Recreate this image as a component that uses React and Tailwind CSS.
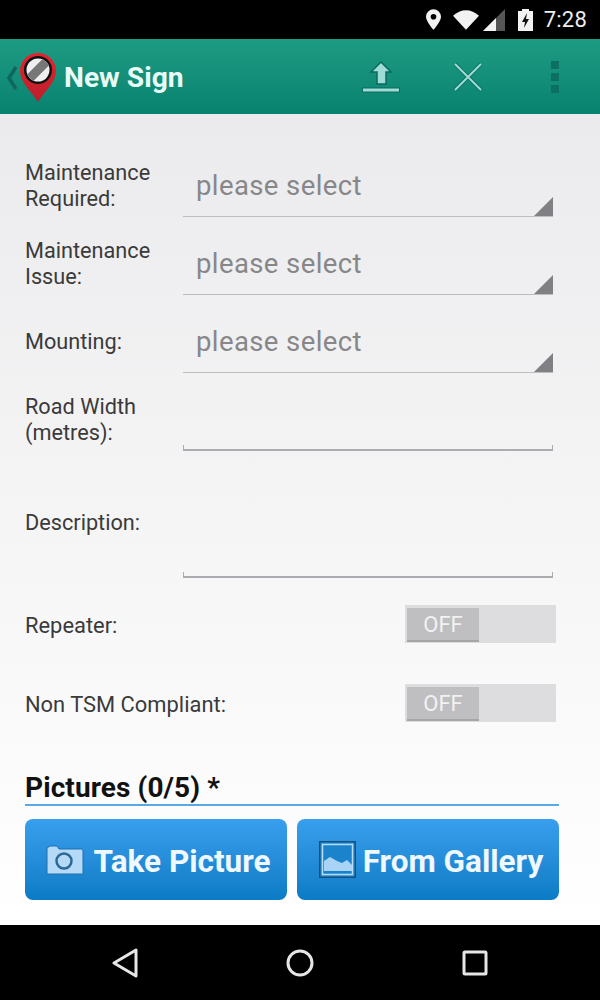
const SelectRow = ({ label }) => (
  <div className="flex h-[78px]">
    <div className="w-[158px] shrink-0 self-center pt-[16px] text-[21.7px] leading-[26px] text-[#3a3a3a]">{label}</div>
    <div className="relative flex h-[78px] w-[370px] items-end border-b border-[#bdbcbf] pb-[13px] pl-[13px] text-[27.5px] leading-[34px] tracking-[0.4px] text-[#878789]">
      please select
      <div className="absolute bottom-0 right-0 h-[19px] w-[19px] bg-[#808084] [clip-path:polygon(100%_0,100%_100%,0_100%)]" />
    </div>
  </div>
);

const TextRow = ({ label, height, labelTop }) => (
  <div className="flex" style={{ height }}>
    <div className="w-[158px] shrink-0 text-[21.7px] leading-[26px] text-[#3a3a3a]" style={{ paddingTop: labelTop }}>{label}</div>
    <div className="w-[370px] self-end">
      <div className="h-[6px] border-x border-b-2 border-[#acacb0]" />
    </div>
  </div>
);

const ToggleRow = ({ label }) => (
  <div className="flex h-[38px] items-center justify-between">
    <div className="pt-[3px] text-[21.9px] leading-[26px] text-[#3a3a3a]">{label}</div>
    <div className="mr-[3px] h-[38px] w-[151px] bg-[#dddcdf] pl-[2px] pt-[3px]">
      <div className="flex h-[34px] w-[72px] items-center justify-center border-b-2 border-[#a5a5a8] bg-[#bfbec1] text-[22px] text-[#f2f2f2]">OFF</div>
    </div>
  </div>
);

const CameraIcon = () => (
  <svg width="38" height="30" viewBox="0 0 38 30">
    <path d="M1 8V3l3-2h7l2 3h22c1 0 2 1 2 2v22c0 1-1 1-2 1H3c-1 0-2 0-2-1z" fill="#b4daf7" stroke="#1f6fad" strokeWidth="1" />
    <circle cx="18" cy="16" r="7.5" fill="#b4daf7" stroke="#2a6896" strokeWidth="2.5" />
  </svg>
);

const GalleryIcon = () => (
  <svg width="37" height="37" viewBox="0 0 37 37">
    <rect x="0.75" y="0.75" width="35.5" height="35.5" fill="#2a8fd6" stroke="#15507f" strokeWidth="1.5" />
    <rect x="3.5" y="3.5" width="30" height="30" fill="#1b82cc" stroke="#b5dcf7" strokeWidth="1.5" />
    <path d="M5 30V20l6-4 7 4 5 2 5-3 5 5v6z" fill="#a9d4f5" />
  </svg>
);

export default function App() {
  return (
    <div className="flex h-[1000px] w-[600px] flex-col overflow-hidden bg-black font-['Roboto',sans-serif]">
      <div className="flex h-[39px] shrink-0 items-center justify-end bg-black pr-[13px] text-[#ededed]">
        <svg width="15" height="21" viewBox="0 0 16 22" className="mr-[12px]">
          <path fillRule="evenodd" d="M8 0a8 8 0 0 1 8 8c0 5-8 14-8 14S0 13 0 8a8 8 0 0 1 8-8zm0 5a3 3 0 1 0 0 6 3 3 0 0 0 0-6z" fill="#f2f2f2" />
        </svg>
        <svg width="26" height="20" viewBox="0 0 28 21" className="mr-[4px]">
          <path d="M0 6C4 2 9 0 14 0s10 2 14 6L14 21z" fill="#f2f2f2" />
        </svg>
        <svg width="22" height="22" viewBox="0 0 22 22" className="mr-[13px]">
          <path d="M22 0v22H0z" fill="#555" />
          <path d="M13 9v13H0z" fill="#f2f2f2" />
        </svg>
        <svg width="15" height="22" viewBox="0 0 15 22" className="mr-[11px]">
          <path d="M4 2V0h7v2h4v20H0V2z" fill="#f2f2f2" />
          <path d="M9 4 4 13h3l-1 6 5-9H8z" fill="#111" />
        </svg>
        <div className="text-[22px] leading-none tracking-[0.2px]">7:28</div>
      </div>

      <div className="flex h-[75px] shrink-0 items-center bg-gradient-to-b from-[#1e9b83] to-[#06826f]">
        <svg width="12" height="24" viewBox="0 0 12 24" className="ml-[6px] mt-[2px]">
          <path d="M10 1 3 12l7 11" fill="none" stroke="#0f6660" strokeWidth="3.5" />
        </svg>
        <svg width="38" height="50" viewBox="0 0 38 50" className="ml-[1px] mt-[2px] shrink-0">
          <defs>
            <linearGradient id="pin" x1="0" y1="0" x2="0" y2="1">
              <stop offset="0" stopColor="#e8222e" />
              <stop offset="1" stopColor="#b9202b" />
            </linearGradient>
          </defs>
          <path d="M19 0c10 0 18 8 18 18 0 11-11 20-18 31C12 38 1 29 1 18 1 8 9 0 19 0z" fill="url(#pin)" />
          <circle cx="19" cy="17" r="14" fill="#111" />
          <circle cx="19" cy="17" r="11.5" fill="#efefef" />
          <path d="M11 25 27 9" stroke="#777" strokeWidth="9" />
        </svg>
        <div className="ml-[7px] mt-[4px] text-[28.2px] font-bold leading-none text-[#e8fbf7]">New Sign</div>
        <div className="flex-1" />
        <svg width="38" height="32" viewBox="0 0 38 32" className="mr-[52px]">
          <path d="M19 1 29 11h-5v12h-9V11H9z" fill="#a0dcd6" stroke="#0b6a60" strokeWidth="1.5" />
          <rect x="0.5" y="27" width="37" height="4" fill="#a0dcd6" stroke="#0b6a60" strokeWidth="1" />
        </svg>
        <svg width="32" height="32" viewBox="0 0 32 32" className="mr-[67px]">
          <path d="M3 3l26 26M29 3 3 29" stroke="#0b6a60" strokeWidth="3.5" />
          <path d="M3 3l26 26M29 3 3 29" stroke="#a0dcd6" strokeWidth="2" />
        </svg>
        <div className="mr-[41px] flex flex-col gap-[4px]">
          <div className="h-[8px] w-[8px] bg-[#0d6f63]" />
          <div className="h-[8px] w-[8px] bg-[#0d6f63]" />
          <div className="h-[8px] w-[8px] bg-[#0d6f63]" />
        </div>
      </div>

      <div className="flex flex-1 flex-col bg-gradient-to-b from-[#ebebed] to-[#ffffff] pl-[25px] pr-[41px] pt-[25px]">
        <SelectRow label={<>Maintenance<br />Required:</>} />
        <SelectRow label={<>Maintenance<br />Issue:</>} />
        <SelectRow label="Mounting:" />
        <TextRow label={<>Road Width<br />(metres):</>} height="78px" labelTop="21px" />
        <TextRow label="Description:" height="127px" labelTop="59px" />
        <div className="mt-[27px] flex flex-col gap-[41px]">
          <ToggleRow label="Repeater:" />
          <ToggleRow label="Non TSM Compliant:" />
        </div>
        <div className="mt-[50px] border-b-2 border-[#5aa8e6] text-[28px] font-bold leading-[32px] tracking-[0.1px] text-[#111]">Pictures (0/5) *</div>
        <div className="mt-[13px] flex gap-[10px]">
          <button className="flex h-[81px] w-[262px] items-center justify-center gap-[9px] rounded-[8px] bg-gradient-to-b from-[#389fee] to-[#0a7bc5] pl-[5px] text-[31.5px] font-bold text-[#eef8fe]">
            <CameraIcon />
            <span className="mt-[4px]">Take Picture</span>
          </button>
          <button className="flex h-[81px] w-[262px] items-center justify-center gap-[7px] rounded-[8px] bg-gradient-to-b from-[#389fee] to-[#0a7bc5] pl-[6px] text-[31.5px] font-bold text-[#eef8fe]">
            <GalleryIcon />
            <span className="mt-[4px]">From Gallery</span>
          </button>
        </div>
      </div>

      <div className="flex h-[75px] shrink-0 items-center justify-between bg-black pl-[112px] pr-[112px]">
        <svg width="26" height="30" viewBox="0 0 26 30">
          <path d="M24 2v26L2 15z" fill="none" stroke="#e6e6e6" strokeWidth="3" strokeLinejoin="round" />
        </svg>
        <svg width="28" height="28" viewBox="0 0 28 28">
          <circle cx="14" cy="14" r="12" fill="none" stroke="#e6e6e6" strokeWidth="3" />
        </svg>
        <svg width="26" height="26" viewBox="0 0 26 26">
          <rect x="2" y="2" width="22" height="22" rx="1" fill="none" stroke="#e6e6e6" strokeWidth="3" />
        </svg>
      </div>
    </div>
  );
}
